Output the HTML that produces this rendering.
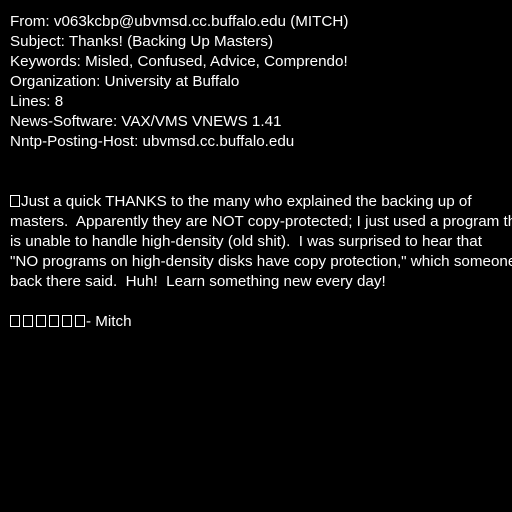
<!DOCTYPE html>
<html><head><style>
html,body{margin:0;padding:0;background:#000;width:512px;height:512px;overflow:hidden}
pre{margin:0;padding:12px 0 0 10px;width:502px;height:500px;overflow:hidden;font-family:"Liberation Sans",sans-serif;font-size:15.2px;line-height:20px;color:#fff;white-space:pre}
.b{display:inline-block;width:8px;height:10px;border:1px solid #fff;margin-right:3px;vertical-align:-1px}
.b.l{margin-right:1px}
</style></head><body><pre>From: v063kcbp@ubvmsd.cc.buffalo.edu (MITCH)
Subject: Thanks! (Backing Up Masters)
Keywords: Misled, Confused, Advice, Comprendo!
Organization: University at Buffalo
Lines: 8
News-Software: VAX/VMS VNEWS 1.41
Nntp-Posting-Host: ubvmsd.cc.buffalo.edu


<span class="b l"></span>Just a quick THANKS to the many who explained the backing up of
masters.  Apparently they are NOT copy-protected; I just used a program that
is unable to handle high-density (old shit).  I was surprised to hear that
"NO programs on high-density disks have copy protection," which someone
back there said.  Huh!  Learn something new every day!

<span class="b"></span><span class="b"></span><span class="b"></span><span class="b"></span><span class="b"></span><span class="b l"></span>- Mitch</pre></body></html>
